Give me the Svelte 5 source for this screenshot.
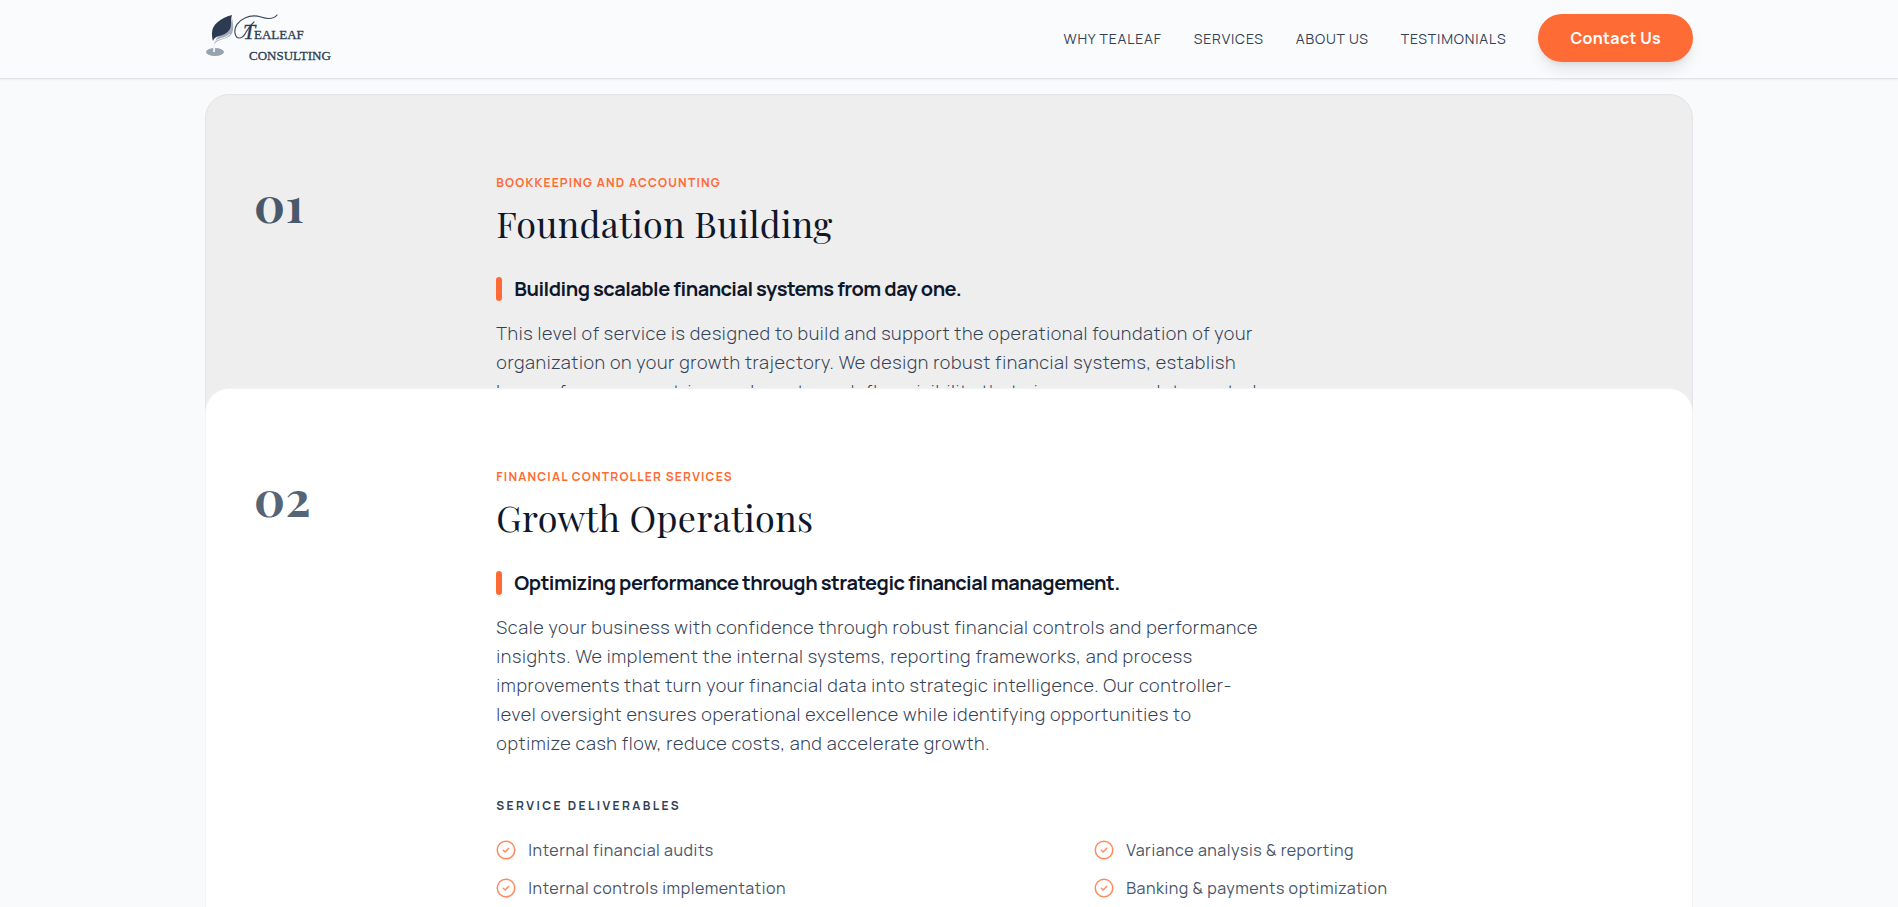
<script lang="ts">
  type Service = {
    number: string;
    label: string;
    title: string;
    tagline: string;
    description: string;
    deliverables: string[];
  };

  const links = [
    { href: '#why', text: 'Why Tealeaf' },
    { href: '#services', text: 'Services' },
    { href: '#about', text: 'About Us' },
    { href: '#testimonials', text: 'Testimonials' }
  ];

  const services: Service[] = [
    {
      number: '01',
      label: 'Bookkeeping and Accounting',
      title: 'Foundation Building',
      tagline: 'Building scalable financial systems from day one.',
      description:
        'This level of service is designed to build and support the operational foundation of your organization on your growth trajectory. We design robust financial systems, establish key performance metrics, and create cash flow visibility that gives you complete control.',
      deliverables: []
    },
    {
      number: '02',
      label: 'Financial Controller Services',
      title: 'Growth Operations',
      tagline: 'Optimizing performance through strategic financial management.',
      description:
        'Scale your business with confidence through robust financial controls and performance insights. We implement the internal systems, reporting frameworks, and process improvements that turn your financial data into strategic intelligence. Our controller-level oversight ensures operational excellence while identifying opportunities to optimize cash flow, reduce costs, and accelerate growth.',
      deliverables: [
        'Internal financial audits',
        'Variance analysis & reporting',
        'Internal controls implementation',
        'Banking & payments optimization'
      ]
    }
  ];
</script>

<div class="page">
  <header>
    <div class="container bar">
      <a class="logo" href="#top" aria-label="Tealeaf Consulting">
        <svg width="128" height="48" viewBox="0 0 128 48">
          <ellipse cx="10" cy="38" rx="9" ry="4" fill="#98a1ae" />
          <path d="M9 38c0-4 0-6 1-10" fill="none" stroke="#eef1f5" stroke-width="2" />
          <path d="M27 4c2 8 2 14-2 18-4 3-11 3-16 8 2-6 5-9 9-12 5-4 8-8 9-14z" fill="#a5adb9" />
          <path d="M27 1C15 4 7 11 7 19c0 3 0 5 1 8 1-3 3-4 6-5 8-2 12-6 12-12 0-3 0-6 1-9z" fill="#2c3b52" />
          <path d="M8 29c4-5 12-4 17-9" fill="none" stroke="#f8fafc" stroke-width="1" />
          <path
            d="M72 1C68 6 62 5 56 3S46 1 40 4C33 7 29 13 30 19c1 7 7 6 10 1s4-8 9-12"
            fill="none"
            stroke="#3d4b60"
            stroke-width="1.2"
            stroke-linecap="round"
          />
          <text class="script" x="38" y="25">T</text>
          <text x="49" y="25">EALEAF</text>
          <text x="44" y="46">CONSULTING</text>
        </svg>
      </a>
      <nav>
        {#each links as link (link.href)}
          <a href={link.href}>{link.text}</a>
        {/each}
        <button type="button">Contact Us</button>
      </nav>
    </div>
  </header>

  <main class="container stack">
    {#each services as service (service.number)}
      <article class="card">
        <div class="number">{service.number}</div>
        <div class="content">
          <p class="label">{service.label}</p>
          <h2>{service.title}</h2>
          <h3>{service.tagline}</h3>
          <p class="description">{service.description}</p>
          {#if service.deliverables.length > 0}
            <h4>Service Deliverables</h4>
            <ul>
              {#each service.deliverables as item (item)}
                <li>
                  <svg width="20" height="20" viewBox="0 0 20 20" aria-hidden="true">
                    <circle cx="10" cy="10" r="8.75" />
                    <path d="M7.3 10.2l1.9 1.8 3.4-3.6" />
                  </svg>
                  {item}
                </li>
              {/each}
            </ul>
          {/if}
        </div>
      </article>
    {/each}
  </main>
</div>

<style>
  .page {
    --accent: #ff6b35;
    --ink: #0f172a;
    --slate: #334155;
    --serif: 'Playfair Display', 'Liberation Serif', serif;
    height: 100vh;
    overflow: hidden;
    background: #f8fafc;
    color: var(--slate);
    font-family: Manrope, Inter, sans-serif;
  }

  .container {
    box-sizing: border-box;
    width: 100%;
    max-width: 1536px;
    margin: 0 auto;
    padding: 0 24px;
  }

  header {
    background: #fafbfd;
    border-bottom: 1px solid #e0e4e9;
    box-shadow: 0 1px 2px rgba(0, 0, 0, 0.06);
  }

  .bar {
    display: flex;
    align-items: center;
    justify-content: space-between;
    padding-top: 14px;
    padding-bottom: 16px;
  }

  .logo svg {
    display: block;
    overflow: visible;
  }

  .logo text {
    font-family: 'Liberation Serif', serif;
    font-size: 13px;
    fill: #2c3b52;
    stroke: #2c3b52;
    stroke-width: 0.3;
  }

  .logo .script {
    font-size: 22px;
    font-style: italic;
  }

  nav {
    display: flex;
    align-items: center;
    gap: 32px;
  }

  nav a {
    color: var(--slate);
    font-size: 14px;
    letter-spacing: 0.06em;
    text-decoration: none;
    text-transform: uppercase;
  }

  button {
    height: 48px;
    padding: 0 32px;
    border: none;
    border-radius: 24px;
    background: var(--accent);
    box-shadow:
      0 10px 15px -3px rgba(0, 0, 0, 0.1),
      0 4px 6px -4px rgba(0, 0, 0, 0.1);
    color: #fff;
    font-family: inherit;
    font-size: 16px;
    font-weight: 700;
    letter-spacing: 0.02em;
    cursor: pointer;
  }

  .stack {
    display: grid;
    grid-template-rows: 294px auto;
    align-items: start;
    margin-top: 15px;
  }

  .card {
    display: grid;
    grid-template-columns: repeat(12, minmax(0, 1fr));
    column-gap: 64px;
    padding: 80px 48px;
    border: 1px solid #e2e4e7;
    border-radius: 24px;
    background: #eee;
  }

  .card:last-child {
    border-color: #f1f3f5;
    background: #fff;
  }

  .number {
    grid-column: span 2;
    color: #4a586b;
    font-family: var(--serif);
    font-size: 48px;
    font-weight: 700;
    letter-spacing: 0.01em;
    line-height: 56px;
  }

  .card:last-child .number {
    color: #566477;
  }

  .content {
    grid-column: span 10;
  }

  .label {
    margin: 0 0 8px;
    color: var(--accent);
    font-size: 12px;
    font-weight: 700;
    letter-spacing: 0.1em;
    line-height: 16px;
    text-transform: uppercase;
  }

  h2 {
    margin: 0 0 28px;
    color: var(--ink);
    font-family: var(--serif);
    font-size: 36px;
    font-weight: 400;
    letter-spacing: 0.01em;
    line-height: 48px;
  }

  h3 {
    display: flex;
    align-items: center;
    gap: 12px;
    margin: 0 0 16px;
    color: var(--ink);
    font-size: 20px;
    font-weight: 700;
    letter-spacing: -0.025em;
    line-height: 28px;
  }

  h3::before {
    width: 6px;
    height: 24px;
    border-radius: 3px;
    background: var(--accent);
    content: '';
  }

  .description {
    max-width: 768px;
    margin: 0;
    font-size: 18px;
    font-weight: 300;
    letter-spacing: 0.034em;
    line-height: 29px;
  }

  h4 {
    margin: 40px 0 24px;
    font-size: 12px;
    font-weight: 700;
    letter-spacing: 0.2em;
    line-height: 16px;
    text-transform: uppercase;
  }

  ul {
    display: grid;
    grid-template-columns: 1fr 1fr;
    gap: 14px 48px;
    margin: 0;
    padding: 0;
    list-style: none;
  }

  li {
    display: flex;
    align-items: center;
    gap: 12px;
    color: #475569;
    font-size: 16px;
    letter-spacing: 0.034em;
    line-height: 24px;
  }

  li svg {
    flex: none;
    fill: none;
    stroke: #ff8a5f;
    stroke-width: 1.5;
    stroke-linecap: round;
    stroke-linejoin: round;
  }
</style>
